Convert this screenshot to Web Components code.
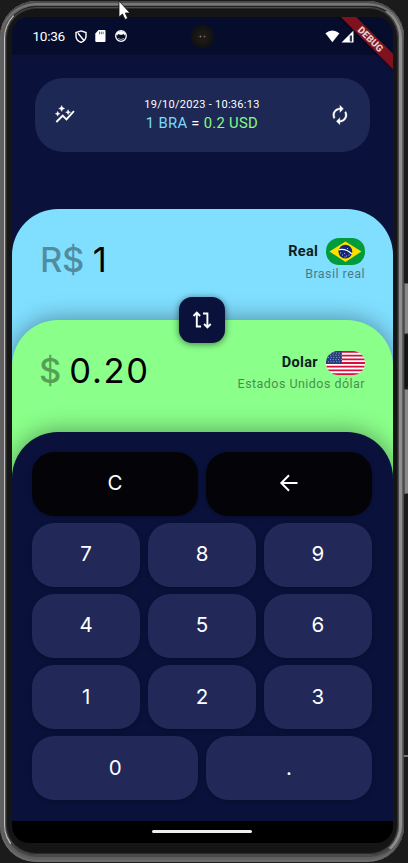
<!DOCTYPE html>
<html lang="pt-BR">
<head>
<meta charset="utf-8">
<title>Currency converter</title>
<style>
html,body{margin:0;width:408px;height:863px;overflow:hidden;background:#1b1b1b;font-family:Roboto,"Liberation Sans",sans-serif;color:#fff}
</style>
</head>
<body>
<phone-frame>
  <status-bar></status-bar>
  <rate-card date="19/10/2023 - 10:36:13" from="1 BRA" to="0.2 USD"></rate-card>
  <currency-panel class="from" symbol="R$" amount="1" name="Real" detail="Brasil real">
    <svg slot="flag" width="39" height="27" viewBox="0 0 39 27"><rect width="39" height="27" rx="13" fill="#009c3b"/><path d="M3.5 13.5L19.5 3.5 35.5 13.5 19.5 24z" fill="#ffdf00"/><circle cx="19.4" cy="13.6" r="6.9" fill="#12277a"/><path d="M13 11.6q7-1.5 12.8 4.2" stroke="#fff" stroke-width="1.3" fill="none"/><path d="M14 15h1M16 17h1M18 15.5h1M20 18h1M22.500 17h1M18.500 19h1M21 10.500h1" stroke="#b8c4e8" stroke-width="1"/></svg>
  </currency-panel>
  <currency-panel class="to" symbol="$" amount="0.20" name="Dolar" detail="Estados Unidos dólar">
    <svg slot="flag" width="39" height="24" viewBox="0 0 39 24"><defs><clipPath id="pill"><rect width="39" height="24" rx="12"/></clipPath></defs><g clip-path="url(#pill)"><path fill="#fff" d="M0 0h39v24H0z"/><path d="M0 .92h39M0 4.61h39M0 8.3h39M0 12h39M0 15.690h39M0 19.380h39M0 23.080h39" stroke="#d80d3c" stroke-width="1.85"/><path fill="#253c7c" d="M0 0h16v12.900H0z"/><path d="M2 2h14M4 4.200h12M2 6.400h14M4 8.600h12M2 10.800h14" stroke="#a9b6d2" stroke-width=".9" stroke-dasharray="1 1.700"/></g></svg>
  </currency-panel>
  <swap-button></swap-button>
  <key-pad></key-pad>
  <nav-bar></nav-bar>
</phone-frame>
<script>
function element(name, html) {
  customElements.define(name, class extends HTMLElement {
    connectedCallback() {
      if (this.shadowRoot) return;
      const root = this.attachShadow({ mode: 'open' });
      root.innerHTML = html.replace(/\{(\w+)\}/g, (_, key) => this.getAttribute(key) || '');
    }
  });
}

element('phone-frame', `<style>
:host{display:flex;position:relative;box-sizing:border-box;width:408px;height:863px}
.shell{position:absolute;left:0;top:1px;width:404px;height:861px;box-sizing:border-box;border-radius:36px;background:#5e5e5e;box-shadow:inset 0 2px 1px #484848,inset 0 4px 1px #7c7c7c,inset -1px 0 0 #4a4a4a,inset 0 -2px 2px #6e6e6e}
.inner{position:absolute;left:4px;top:6px;width:398px;height:851px;box-sizing:border-box;border-radius:32px;background:#151515;border:1px solid #c4c4c4;border-right:3px solid #8e8e8e;border-top:1px solid #222;border-bottom:2px solid #4a4a4a;box-shadow:inset 0 0 0 1px #4b4b4b,inset 0 0 0 2px #2b2b2b}
.side{position:absolute;left:404px;width:5px;box-sizing:border-box;background:#888;border:1px solid #555}
.screen{position:relative;z-index:1;display:flex;flex-direction:column;width:381px;height:826px;margin:17px 0 0 12px;border-radius:17px;background:#0a123c;overflow:hidden}
.cursor{position:absolute;z-index:3;left:118px;top:0}
.ribbon{position:absolute;right:0;top:0;width:56px;height:56px;overflow:hidden}
.ribbon span{position:absolute;left:-11px;top:16.500px;width:90px;height:11px;transform:rotate(45deg);background:#7f121d;color:#e3cbd0;font:900 9.800px/11px Roboto,sans-serif;text-align:center;text-indent:-1px;box-shadow:0 1px 4px #0006}
.edge{position:absolute;left:404px;top:755px;width:4px;height:2px;background:#777}
</style>
<div class="shell"></div><div class="inner"></div>
<div class="side" style="top:283px;height:51px"></div><div class="side" style="top:334px;height:54px;background:#151515;border-color:#222"></div><div class="side" style="top:389px;height:105px"></div><div class="edge"></div>
<div class="screen"><slot></slot><div class="ribbon"><span>DEBUG</span></div></div>
<svg class="cursor" width="13" height="21" viewBox="0 0 13 21"><path d="M1 1v16l3.500-3 2.500 5.500 2.700-1.200L7.300 13H12z" fill="#fff" stroke="#111" stroke-width=".8"/></svg>`);

element('status-bar', `<style>
:host{display:flex;flex:none;position:relative;box-sizing:border-box;height:38px;background:#060d2c;align-items:center;padding:0 39px 0 20.500px}
span{font-size:13.600px;line-height:16px;letter-spacing:-.3px;width:42px}
.lens{position:absolute;left:179px;top:8px;width:23px;height:23px;border-radius:50%;background:radial-gradient(circle at 9.500px 11.500px,#76705a 0 .7px,transparent 1.300px),radial-gradient(circle at 13.500px 11.500px,#804d36 0 .7px,transparent 1.300px),radial-gradient(circle,#1c1a19 0 5px,#141414 8px,#0e0e0e)}
.spacer{flex:1}svg{flex:none}
</style>
<span>10:36</span>
<svg width="12" height="13" viewBox="0 0 12 13" style="margin-right:8.500px"><path d="M6 .9L11 2.500v3.800c0 2.800-2 5-5 6.100-3-1.100-5-3.300-5-6.100V2.500zM3 3.200L8.800 10.200" fill="none" stroke="#fff" stroke-width="1.400"/></svg>
<svg width="11" height="12" viewBox="0 0 11 12" style="margin-right:8.500px"><path d="M3.500 0H9.500Q10.500 0 10.500 1v10q0 1-1 1H1.300q-1 0-1-1V3.500z" fill="#fff"/><path d="M4.500 1.700v2.500M6.300 1.700v2.500M8.100 1.700v2.500" stroke="#555b72" stroke-width=".9"/></svg>
<svg width="12" height="12" viewBox="0 0 12 12"><circle cx="6" cy="6" r="5.300" fill="#060d2c" stroke="#fff" stroke-width="1.300"/><path d="M1 4Q3 1 6 1t5 3L9.700 5.500 8.800 4 7 4.700H5L3.200 4 2.300 5.500z" fill="#fff"/><path d="M3 8.500q3 2 6 0" stroke="#9aa3b8" fill="none"/></svg>
<i class="spacer"></i>
<svg width="15" height="13" viewBox="0 0 15 13"><path d="M.4 3.300Q7.300-2.500 14.400 3.300L7.400 12.300z" fill="#fff"/></svg>
<svg width="13" height="13" viewBox="0 0 13 13" style="margin-left:1px"><path d="M12.500.5v12H.5z" fill="#fff"/><path d="M8.800 5.500h2.200v6H8.800z" fill="#343a54"/></svg>
<i class="lens"></i>`);

element('rate-card', `<style>
:host{display:flex;flex:none;align-items:center;justify-content:space-between;box-sizing:border-box;width:335px;height:74px;margin:23px 0 57px 23px;padding:0 18px;border-radius:28px;background:#1e2854}
.text{display:flex;flex-direction:column;align-items:center;margin-left:-1px}
.date{font-size:11px;line-height:14px;letter-spacing:.28px;white-space:nowrap}
.rate{font-size:14.800px;line-height:19px;margin-top:2px;letter-spacing:.3px;white-space:nowrap}
.a{color:#7adbfb}.b{color:#84fb86}
</style>
<svg width="24" height="24" viewBox="0 0 24 24" fill="#fff"><path d="M2.700 18.200L9.700 11.200l3.700 3.700 6.900-7.400 1.300 1.200-8.100 9-3.800-3.800-5.700 5.800z"/><path d="M15.100 11.800l.8-1.800 1.800-.8-1.800-.8-.8-1.800-.8 1.800-1.800.8 1.800.8zM8.700 8.600l1-2.100 2.100-1-2.100-1-1-2.100-1 2.100-2.100 1 2.100 1zM4.700 13.300l.8-1.700 1.700-.8-1.700-.8-.8-1.700-.8 1.700-1.700.8 1.700.8z" stroke="#fff" stroke-width=".3"/></svg>
<div class="text"><div class="date">{date}</div><div class="rate"><span class="a">{from}</span> = <span class="b">{to}</span></div></div>
<svg width="24" height="24" viewBox="0 0 24 24" fill="#fff" stroke="#fff" stroke-width=".3"><g transform="translate(1.200 1.400) scale(.89)"><path d="M12 6v3l4-4-4-4v3c-4.420 0-8 3.580-8 8 0 1.570.46 3.030 1.240 4.260L6.700 14.800A5.870 5.870 0 0 1 6 12c0-3.310 2.690-6 6-6zm6.760 1.740L17.300 9.200c.44.840.7 1.790.7 2.800 0 3.310-2.690 6-6 6v-3l-4 4 4 4v-3c4.420 0 8-3.580 8-8 0-1.570-.46-3.030-1.240-4.260z"/></g></svg>`);

element('currency-panel', `<style>
:host{display:flex;flex:none;justify-content:space-between;box-sizing:border-box;height:171px;padding:29px 28px 0 29px;border-radius:46px 46px 0 0;background:#80dfff;color:#000;margin-bottom:-60px;position:relative}
:host(.to){background:#8aff8a;margin-bottom:-59px;box-shadow:0 0 24px #0006}
.amount{display:flex;align-items:baseline;height:44px;line-height:44px;font-family:Inter,sans-serif;font-size:34.500px;white-space:pre}
.symbol{font-weight:550;opacity:.37;margin:0 9px 0 -1px}
:host(.from) .symbol{letter-spacing:-.4px}
:host(.to) .symbol{margin:0 8px 0 -2px}
:host(.to) .value{letter-spacing:1.700px}
.info{display:flex;flex-direction:column;align-items:flex-end}
.title{display:flex;align-items:center;gap:8px;height:27px;font-size:14.500px;font-weight:700;letter-spacing:.25px;color:#101c20}
:host(.to) .title{letter-spacing:.35px}
.detail{font-size:12.500px;line-height:16px;margin-top:1px;letter-spacing:.46px;opacity:.46;white-space:nowrap}
:host(.to) .detail{margin-top:0}
</style>
<div class="amount"><span class="symbol">{symbol}</span><span class="value">{amount}</span></div>
<div class="info"><div class="title"><span>{name}</span><slot name="flag"></slot></div><div class="detail">{detail}</div></div>`);

element('swap-button', `<style>
:host{position:absolute;left:167px;top:280px;width:46px;height:46px;border-radius:13px;background:#0a123c;box-shadow:0 1px 7px #0008;display:flex;align-items:center;justify-content:center;z-index:1}
</style><svg width="22" height="20" viewBox="0 0 22 20" fill="none" stroke="#fff" stroke-width="1.900"><path d="M5.800 3v13.500H10M2.500 6l3.300-3.300L9.100 6M12 3.500h4.400V17M13.100 14l3.300 3.300 3.300-3.300"/></svg>`);

element('pad-key', `<style>
:host{display:flex;align-items:center;justify-content:center;grid-column:span 2;border-radius:22px;background:#222958;box-shadow:0 1px 4px #0005;color:#fff;font:400 20.500px/26px Inter,sans-serif;padding-bottom:1px;box-sizing:border-box}
:host([wide]){grid-column:span 3}
:host([dark]){background:#040408}
</style><slot></slot>`);

element('key-pad', `<style>
:host{display:grid;flex:none;box-sizing:border-box;position:relative;height:389px;grid-template-columns:repeat(6,1fr);grid-template-rows:repeat(5,1fr);gap:7.600px;padding:20px 21px 21px 20px;background:#0a123c;border-radius:46px 46px 0 0;box-shadow:0 0 24px #0006}
</style>
<pad-key wide dark>C</pad-key><pad-key wide dark><svg width="20" height="20" viewBox="0 0 20 20" fill="none" stroke="#fff" stroke-width="2"><path d="M18.500 10H3M10 2.200L2.300 10l7.700 7.800"/></svg></pad-key>
<pad-key>7</pad-key><pad-key>8</pad-key><pad-key>9</pad-key>
<pad-key>4</pad-key><pad-key>5</pad-key><pad-key>6</pad-key>
<pad-key>1</pad-key><pad-key>2</pad-key><pad-key>3</pad-key>
<pad-key wide>0</pad-key><pad-key wide>.</pad-key>`);

element('nav-bar', `<style>
:host{display:flex;flex:none;height:22px;background:#000;align-items:center;justify-content:center;position:relative}
i{width:100px;height:3px;border-radius:2px;background:#eee;margin:-1px 1px 0 0}
</style><i></i>`);
</script>
</body>
</html>
